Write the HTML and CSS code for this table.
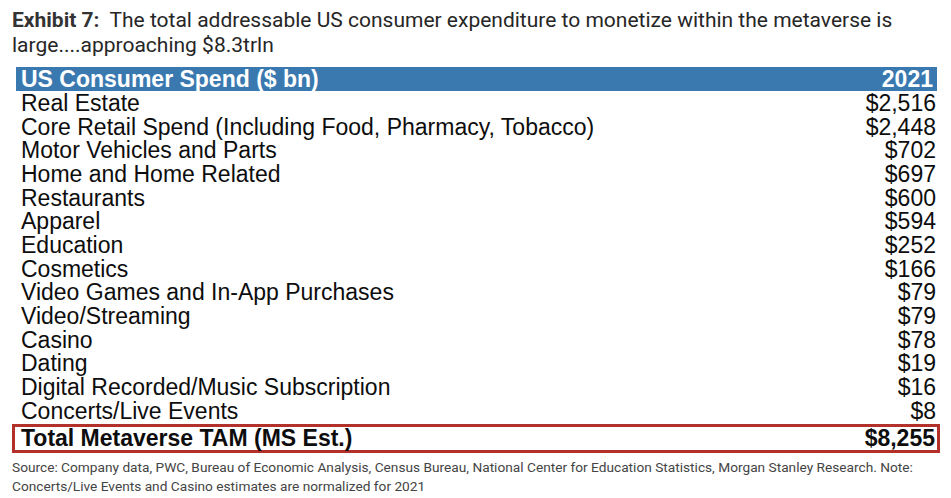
FILE: index.html
```html
<!DOCTYPE html>
<html>
<head>
<meta charset="utf-8">
<link rel="stylesheet" href="styles.css">
</head>
<body>
<div class="page">
  <h1 class="title"><b>Exhibit 7:</b>&nbsp; The total addressable US consumer expenditure to monetize within the metaverse is large....approaching $8.3trln</h1>
  <div class="table">
    <div class="row head"><span>US Consumer Spend ($ bn)</span><span>2021</span></div>
    <div class="row"><span>Real Estate</span><span>$2,516</span></div>
    <div class="row"><span>Core Retail Spend (Including Food, Pharmacy, Tobacco)</span><span>$2,448</span></div>
    <div class="row"><span>Motor Vehicles and Parts</span><span>$702</span></div>
    <div class="row"><span>Home and Home Related</span><span>$697</span></div>
    <div class="row"><span>Restaurants</span><span>$600</span></div>
    <div class="row"><span>Apparel</span><span>$594</span></div>
    <div class="row"><span>Education</span><span>$252</span></div>
    <div class="row"><span>Cosmetics</span><span>$166</span></div>
    <div class="row"><span>Video Games and In-App Purchases</span><span>$79</span></div>
    <div class="row"><span>Video/Streaming</span><span>$79</span></div>
    <div class="row"><span>Casino</span><span>$78</span></div>
    <div class="row"><span>Dating</span><span>$19</span></div>
    <div class="row"><span>Digital Recorded/Music Subscription</span><span>$16</span></div>
    <div class="row"><span>Concerts/Live Events</span><span>$8</span></div>
    <div class="row total"><span>Total Metaverse TAM (MS Est.)</span><span>$8,255</span></div>
  </div>
  <p class="source">Source: Company data, PWC, Bureau of Economic Analysis, Census Bureau, National Center for Education Statistics, Morgan Stanley Research. Note: Concerts/Live Events and Casino estimates are normalized for 2021</p>
</div>
</body>
</html>
```
FILE: styles.css
```css
html, body {
  margin: 0;
  padding: 0;
  background: #fff;
}
.page {
  width: 951px;
  height: 498px;
  overflow: hidden;
  padding: 8px 0 0 12px;
  box-sizing: border-box;
}
.title {
  margin: 0;
  width: 910px;
  font-family: Roboto, "Open Sans", sans-serif;
  font-weight: 400;
  font-size: 21px;
  line-height: 25px;
  color: #262626;
}
.title b {
  font-weight: 700;
  color: #333;
}
.table {
  margin-top: 9px;
  width: 928px;
  font-family: "Liberation Sans", Arial, sans-serif;
  font-size: 23px;
  color: #0d0d0d;
}
.row {
  display: flex;
  justify-content: space-between;
  box-sizing: border-box;
  height: 23.7px;
  line-height: 23.7px;
  padding: 1.2px 4px 0 9px;
  white-space: nowrap;
}
.head {
  margin-left: 4px;
  width: 921px;
  padding: 1px 4px 0 5px;
  background: #3a79b0;
  color: #fff;
  font-weight: 700;
}
.total {
  margin-top: 2px;
  height: 29px;
  line-height: 23px;
  border: 3px solid #b3312b;
  padding: 0 2px 0 6px;
  font-weight: 700;
}
.source {
  margin: 5px 0 0 0;
  width: 925px;
  font-family: Roboto, "Open Sans", sans-serif;
  font-size: 13.7px;
  line-height: 19px;
  color: #444;
}
```
